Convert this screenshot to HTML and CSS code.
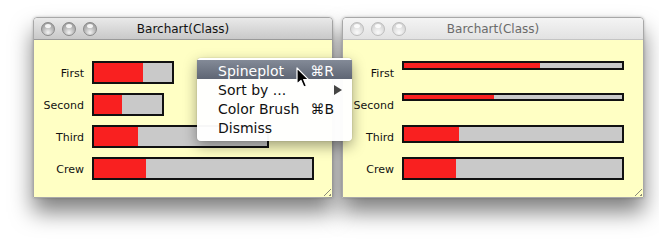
FILE: index.html
```html
<!DOCTYPE html>
<html lang="en">

<head>
  <meta charset="UTF-8">
  <title>Barchart(Class)</title>
  <link rel="stylesheet" href="styles.css">
</head>

<body>
  <div class="desktop">

    <div class="window active">
      <div class="titlebar">
        <div class="lights"><span></span><span></span><span></span></div>
        <div class="title">Barchart(Class)</div>
      </div>
      <div class="plot">
        <div class="row"><span class="label">First</span>
          <div class="bar" style="width: 82px"><div class="fill" style="width: 62.5%"></div></div></div>
        <div class="row"><span class="label">Second</span>
          <div class="bar" style="width: 72px"><div class="fill" style="width: 41.4%"></div></div></div>
        <div class="row"><span class="label">Third</span>
          <div class="bar" style="width: 177px"><div class="fill" style="width: 25.2%"></div></div></div>
        <div class="row"><span class="label">Crew</span>
          <div class="bar" style="width: 222px"><div class="fill" style="width: 24%"></div></div></div>
        <div class="grip"></div>
      </div>
    </div>

    <div class="window inactive wide">
      <div class="titlebar">
        <div class="lights"><span></span><span></span><span></span></div>
        <div class="title">Barchart(Class)</div>
      </div>
      <div class="plot">
        <div class="row"><span class="label">First</span>
          <div class="bar" style="width: 222px; height: 9px"><div class="fill" style="width: 62.5%"></div></div></div>
        <div class="row"><span class="label">Second</span>
          <div class="bar" style="width: 222px; height: 8px"><div class="fill" style="width: 41.4%"></div></div></div>
        <div class="row"><span class="label">Third</span>
          <div class="bar" style="width: 222px; height: 18px"><div class="fill" style="width: 25.2%"></div></div></div>
        <div class="row"><span class="label">Crew</span>
          <div class="bar" style="width: 222px"><div class="fill" style="width: 24%"></div></div></div>
        <div class="grip"></div>
      </div>
    </div>

    <ul class="menu">
      <li class="selected"><span>Spineplot</span><span class="key">&#8984;R</span></li>
      <li><span>Sort by ...</span><span class="arrow"></span></li>
      <li><span>Color Brush</span><span class="key">&#8984;B</span></li>
      <li><span>Dismiss</span></li>
    </ul>

    <svg class="cursor" width="14" height="22" viewBox="0 0 14 22">
      <path d="M1 1 L1 17 L5 13.5 L7.8 20 L10.4 18.8 L7.7 12.6 L12.6 12.6 Z" fill="#000" stroke="#fff" stroke-width="1.2" stroke-linejoin="round"/>
    </svg>
  </div>
</body>

</html>
```

FILE: styles.css
```css
body {
  margin: 0;
  background-color: #fff;
  font-family: "DejaVu Sans", Verdana, sans-serif;
}

.desktop {
  position: relative;
  display: flex;
  gap: 9px;
  padding: 17px 0 0 33px;
  width: 659px;
  height: 246px;
  box-sizing: border-box;
}

.window {
  width: 300px;
  height: 181px;
  display: flex;
  flex-direction: column;
  box-sizing: border-box;
  border: 1px solid #a8a8a8;
  border-radius: 4px 4px 0 0;
  box-shadow: 0 14px 22px rgba(0, 0, 0, 0.5), 0 0 3px rgba(0, 0, 0, 0.2);
}

.window.wide {
  width: 302px;
}

.titlebar {
  position: relative;
  height: 21px;
  display: flex;
  align-items: center;
  border-radius: 4px 4px 0 0;
  border-bottom: 1px solid #9a9a9a;
  background: linear-gradient(#e9e9e9, #c9c9c9);
}

.inactive .titlebar {
  border-bottom-color: #c4c4c4;
  background: linear-gradient(#f4f4f4, #e2e2e2);
}

.lights {
  display: flex;
  gap: 7px;
  padding-left: 7px;
}

.lights span {
  width: 14px;
  height: 14px;
  box-sizing: border-box;
  border-radius: 50%;
  border: 1px solid #8a8a8a;
  background: radial-gradient(circle at 50% 78%, #f2f2f2 0, #bcbcbc 45%, #8e8e8e 100%);
  position: relative;
}

.lights span::after {
  content: '';
  position: absolute;
  left: 3px;
  top: 1px;
  width: 6px;
  height: 4px;
  border-radius: 50%;
  background: rgba(255, 255, 255, 0.85);
}

.inactive .lights span {
  border-color: #bdbdbd;
  background: radial-gradient(circle at 50% 78%, #fafafa 0, #e0e0e0 50%, #c8c8c8 100%);
}

.title {
  position: absolute;
  left: 0;
  right: 0;
  text-align: center;
  font-size: 12px;
  color: #111;
}

.inactive .title {
  color: #6a6a6a;
}

.plot {
  position: relative;
  flex: 1;
  display: flex;
  flex-direction: column;
  gap: 9px;
  padding-top: 21px;
  background-color: #ffffc4;
}

.row {
  display: grid;
  grid-template-columns: 50px auto;
  column-gap: 8px;
  align-items: start;
  height: 23px;
}

.wide .row {
  grid-template-columns: 51px auto;
}

.label {
  margin-top: 6px;
  font-size: 11px;
  line-height: 14px;
  text-align: right;
  color: #111;
}

.bar {
  height: 23px;
  box-sizing: border-box;
  border: 2px solid #111;
  background-color: #c9c9c9;
}

.fill {
  height: 100%;
  background-color: #f92020;
}

.grip {
  position: absolute;
  right: 1px;
  bottom: 1px;
  width: 11px;
  height: 11px;
  background: repeating-linear-gradient(135deg, transparent 0 2px, #8a8a7a 2px 3px, transparent 3px 4px);
  clip-path: polygon(100% 0, 100% 100%, 0 100%);
}

.menu {
  position: absolute;
  left: 197px;
  top: 58px;
  width: 155px;
  margin: 0;
  padding: 2px 0 5px;
  list-style: none;
  border-radius: 4px;
  background-color: rgba(255, 255, 255, 0.97);
  box-shadow: 0 5px 14px rgba(0, 0, 0, 0.38), 0 0 1px rgba(0, 0, 0, 0.4);
  font-size: 14px;
  color: #111;
}

.menu li {
  display: flex;
  justify-content: space-between;
  align-items: center;
  height: 19px;
  padding: 2px 18px 0 21px;
  box-sizing: border-box;
}

.menu li.selected {
  color: #fff;
  background: linear-gradient(#838a97, #5f6674);
}

.key {
  font-size: 14px;
}

.arrow {
  width: 0;
  height: 0;
  margin-right: -8px;
  border-top: 5px solid transparent;
  border-bottom: 5px solid transparent;
  border-left: 8px solid #444;
}

.cursor {
  position: absolute;
  left: 296px;
  top: 67px;
}
```
